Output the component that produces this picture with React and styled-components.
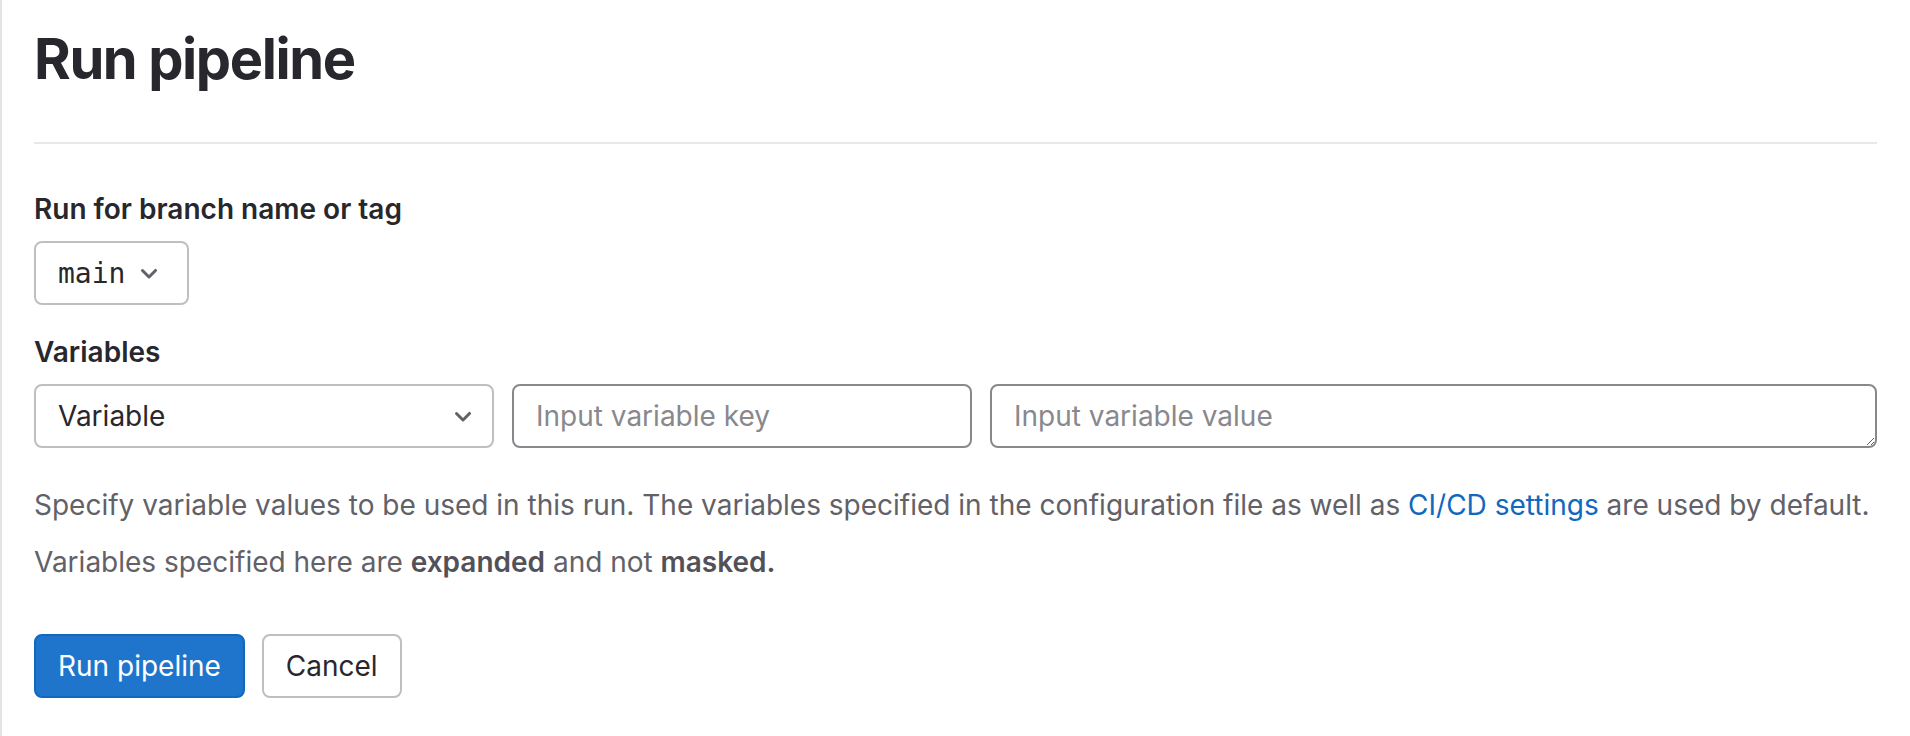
import styled, { createGlobalStyle } from 'styled-components';

const GlobalStyle = createGlobalStyle`
  html, body {
    margin: 0;
    padding: 0;
    background: #fff;
  }
  body {
    font-family: Inter, "Noto Sans", "Liberation Sans", sans-serif;
    color: #28272d;
  }
`;

function ChevronDown() {
  return (
    <svg width="32" height="32" viewBox="0 0 16 16" aria-hidden="true">
      <path
        fill="#626168"
        fillRule="evenodd"
        d="M4.22 6.22a.75.75 0 0 1 1.06 0L8 8.94l2.72-2.72a.75.75 0 1 1 1.06 1.06l-3.25 3.25a.75.75 0 0 1-1.06 0L4.22 7.28a.75.75 0 0 1 0-1.06Z"
      />
    </svg>
  );
}

export default function App() {
  return (
    <>
      <GlobalStyle />
      <Page>
        <Header>
          <Title>Run pipeline</Title>
        </Header>

        <Form onSubmit={(e) => e.preventDefault()}>
          <Label>Run for branch name or tag</Label>
          <BranchToggle type="button">
            <span>main</span>
            <ChevronDown />
          </BranchToggle>

          <Label $top={27}>Variables</Label>
          <VariableRow>
            <TypeSelect type="button">
              <span>Variable</span>
              <ChevronDown />
            </TypeSelect>
            <KeyInput placeholder="Input variable key" />
            <ValueInput rows={1} placeholder="Input variable value" />
          </VariableRow>

          <HelpText>
            Specify variable values to be used in this run. The variables specified in the
            configuration file as well as <Link href="#">CI/CD settings</Link> are used by default.
          </HelpText>
          <HelpText $top={17}>
            Variables specified here are <strong>expanded</strong> and not <strong>masked.</strong>
          </HelpText>

          <Actions>
            <Button type="submit" $primary>Run pipeline</Button>
            <Button type="button">Cancel</Button>
          </Actions>
        </Form>
      </Page>
    </>
  );
}

const Page = styled.div`
  min-height: 736px;
  box-sizing: border-box;
  border-left: 2px solid #e4e4e7;
  padding: 0 33px 0 32px;
`;

const Header = styled.div`
  padding: 24px 0 48px;
  border-bottom: 2px solid #e8e8eb;
`;

const Title = styled.h1`
  margin: 0;
  font-size: 56px;
  line-height: 70px;
  font-weight: 700;
  color: #28272d;
  letter-spacing: -1.4px;
`;

const Form = styled.form`
  padding-top: 45px;
  display: flex;
  flex-direction: column;
  align-items: flex-start;
`;

const Label = styled.label`
  display: block;
  margin-top: ${(p) => p.$top || 0}px;
  margin-bottom: 12px;
  font-size: 28px;
  line-height: 40px;
  font-weight: 600;
  color: #28272d;
`;

const toggleBase = `
  box-sizing: border-box;
  height: 64px;
  display: flex;
  align-items: center;
  justify-content: space-between;
  background: #fff;
  border: 2px solid #bfbfc3;
  border-radius: 8px;
  cursor: pointer;
  color: #28272d;
`;

const BranchToggle = styled.button`
  ${toggleBase}
  width: 155px;
  padding: 0 22px 0 22px;
  gap: 6px;
  font-family: "DejaVu Sans Mono", "Liberation Mono", monospace;
  font-size: 28px;
`;

const VariableRow = styled.div`
  display: flex;
  align-items: stretch;
  gap: 18px;
  width: 100%;
`;

const TypeSelect = styled.button`
  ${toggleBase}
  flex: none;
  width: 460px;
  padding: 0 13px 0 22px;
  font-family: Inter, "Noto Sans", sans-serif;
  font-size: 28px;
  text-align: left;
`;

const fieldBase = `
  box-sizing: border-box;
  height: 64px;
  margin: 0;
  border: 2px solid #89888d;
  border-radius: 8px;
  background: #fff;
  padding: 0 22px;
  font-family: Inter, "Noto Sans", sans-serif;
  font-size: 28px;
  color: #28272d;
  outline: none;

  &::placeholder {
    color: #89888d;
  }
`;

const KeyInput = styled.input`
  ${fieldBase}
  flex: none;
  width: 460px;
`;

const ValueInput = styled.textarea`
  ${fieldBase}
  flex: 1;
  min-width: 0;
  padding-top: 10px;
  line-height: 40px;
  resize: vertical;
`;

const HelpText = styled.p`
  margin: ${(p) => p.$top || 37}px 0 0;
  font-size: 28px;
  line-height: 40px;
  color: #626168;

  strong {
    font-weight: 600;
    color: #535158;
  }
`;

const Link = styled.a`
  color: #1068bf;
  text-decoration: none;
`;

const Actions = styled.div`
  display: flex;
  gap: 17px;
  margin-top: 52px;
`;

const Button = styled.button`
  box-sizing: border-box;
  height: 64px;
  padding: 0 22px;
  border-radius: 8px;
  border: 2px solid ${(p) => (p.$primary ? '#1068bf' : '#bfbfc3')};
  background: ${(p) => (p.$primary ? '#1f75cb' : '#fff')};
  color: ${(p) => (p.$primary ? '#fff' : '#28272d')};
  font-family: Inter, "Noto Sans", sans-serif;
  font-size: 28px;
  font-weight: 400;
  cursor: pointer;
`;
